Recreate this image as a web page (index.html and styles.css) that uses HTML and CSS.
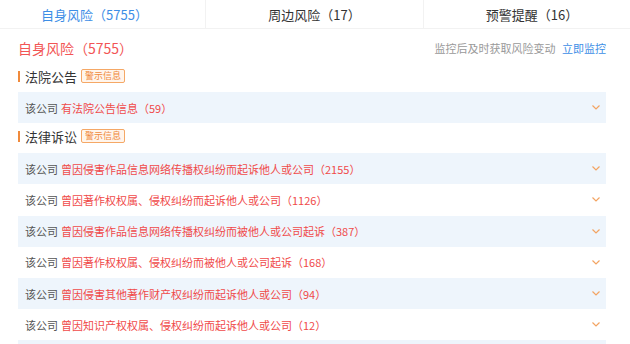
FILE: index.html
```html
<!DOCTYPE html>
<html lang="zh-CN">
<head>
    <meta charset="UTF-8">
    <meta name="viewport" content="width=device-width, initial-scale=1.0">
    <title>风险信息</title>
    <link rel="stylesheet" href="styles.css">
</head>
<body>

<div class="tabs">
    <div class="tab tab-left active">自身风险（5755）</div>
    <div class="tab tab-mid">周边风险（17）</div>
    <div class="tab tab-right">预警提醒（16）</div>
</div>

<main>
    <div class="title-row">
        <h2>自身风险（5755）</h2>
        <div class="monitor">
            <span class="monitor-tip">监控后及时获取风险变动</span>
            <span class="monitor-link">立即监控</span>
        </div>
    </div>

    <!-- 法院公告 -->
    <div class="section-head">
        <span class="section-name">法院公告</span>
        <span class="badge">警示信息</span>
    </div>
    <div class="risk-list">
        <div class="risk-row"><span class="who">该公司</span><span class="what">有法院公告信息（59）</span><svg class="chevron" viewBox="0 0 8 5"><polyline points="0.5,0.5 4,4 7.5,0.5"/></svg></div>
    </div>

    <!-- 法律诉讼 -->
    <div class="section-head">
        <span class="section-name">法律诉讼</span>
        <span class="badge">警示信息</span>
    </div>
    <div class="risk-list">
        <div class="risk-row"><span class="who">该公司</span><span class="what">曾因侵害作品信息网络传播权纠纷而起诉他人或公司（2155）</span><svg class="chevron" viewBox="0 0 8 5"><polyline points="0.5,0.5 4,4 7.5,0.5"/></svg></div>
        <div class="risk-row"><span class="who">该公司</span><span class="what">曾因著作权权属、侵权纠纷而起诉他人或公司（1126）</span><svg class="chevron" viewBox="0 0 8 5"><polyline points="0.5,0.5 4,4 7.5,0.5"/></svg></div>
        <div class="risk-row"><span class="who">该公司</span><span class="what">曾因侵害作品信息网络传播权纠纷而被他人或公司起诉（387）</span><svg class="chevron" viewBox="0 0 8 5"><polyline points="0.5,0.5 4,4 7.5,0.5"/></svg></div>
        <div class="risk-row"><span class="who">该公司</span><span class="what">曾因著作权权属、侵权纠纷而被他人或公司起诉（168）</span><svg class="chevron" viewBox="0 0 8 5"><polyline points="0.5,0.5 4,4 7.5,0.5"/></svg></div>
        <div class="risk-row"><span class="who">该公司</span><span class="what">曾因侵害其他著作财产权纠纷而起诉他人或公司（94）</span><svg class="chevron" viewBox="0 0 8 5"><polyline points="0.5,0.5 4,4 7.5,0.5"/></svg></div>
        <div class="risk-row"><span class="who">该公司</span><span class="what">曾因知识产权权属、侵权纠纷而起诉他人或公司（12）</span><svg class="chevron" viewBox="0 0 8 5"><polyline points="0.5,0.5 4,4 7.5,0.5"/></svg></div>
        <div class="risk-row"></div>
    </div>
</main>

</body>
</html>
```

FILE: styles.css
```css
body {
    font-family: "Microsoft YaHei", "Noto Sans CJK SC", "Noto Sans", sans-serif;
    margin: 0;
    padding: 0;
    background-color: #fff;
    color: #333;
    overflow: hidden;
}
.tabs {
    display: flex;
    height: 28px;
    border-bottom: 1px solid #f2f2f2;
}
.tab {
    display: flex;
    align-items: center;
    justify-content: center;
    font-size: 13px;
    color: #333;
}
.tab-left {
    width: 206px;
    padding-right: 16px;
    box-sizing: border-box;
    border-right: 1px solid #f2f2f2;
}
.tab-mid {
    width: 217px;
    border-right: 1px solid #f2f2f2;
}
.tab-right {
    flex: 1;
    padding-left: 10px;
}
.tab.active {
    color: #3d8ee6;
}
main {
    padding: 0 24px 0 18px;
}
.title-row {
    display: flex;
    align-items: center;
    justify-content: space-between;
    height: 20px;
    margin-top: 9px;
}
.title-row h2 {
    margin: 0;
    font-size: 14px;
    font-weight: normal;
    color: #f25555;
}
.monitor {
    font-size: 11px;
}
.monitor-tip {
    color: #999;
    margin-right: 4px;
}
.monitor-link {
    color: #3d8ee6;
}
.section-head {
    display: flex;
    align-items: center;
    height: 16px;
    margin-top: 10px;
    margin-bottom: 8px;
}
.section-name {
    font-size: 13px;
    color: #333;
    border-left: 2px solid #f08a3c;
    padding-left: 5px;
    line-height: 11px;
}
.badge {
    margin-left: 4px;
    font-size: 9px;
    line-height: 12px;
    padding: 0 3px;
    color: #f08a3c;
    background-color: #fff5ec;
    border: 1px solid #f5a866;
    border-radius: 2px;
}
.risk-list + .section-head {
    margin-top: 5px;
    margin-bottom: 9px;
}
.risk-row {
    display: flex;
    align-items: center;
    height: 31.2px;
    padding: 0 6px 0 7px;
    font-size: 11px;
}
.risk-row:nth-child(odd) {
    background-color: #eef5fc;
}
.who {
    color: #555;
    margin-right: 3px;
}
.what {
    color: #f04a4a;
}
.chevron {
    margin-left: auto;
    width: 8px;
    height: 5px;
    fill: none;
    stroke: #f3a462;
    stroke-width: 1.2;
}
```
